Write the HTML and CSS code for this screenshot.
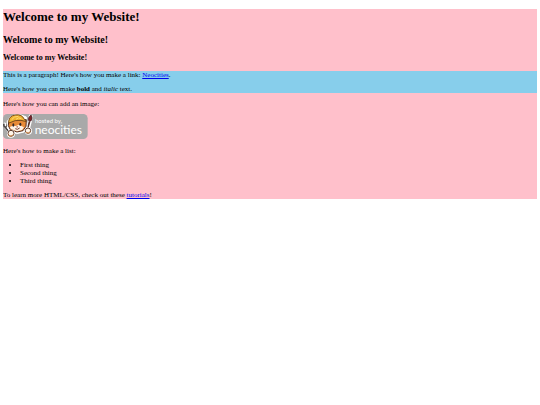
FILE: index.html
```html
<!DOCTYPE html>
<html lang="en">
<head>
<meta charset="UTF-8">
<meta name="viewport" content="width=device-width, initial-scale=1">
<title>Welcome to my Website!</title>
<link rel="stylesheet" href="styles.css">
</head>
<body>
<main class="page">
  <h1 class="title">Welcome to my Website!</h1>
  <h2 class="subtitle">Welcome to my Website!</h2>
  <h3 class="heading">Welcome to my Website!</h3>
  <div class="intro">
    <p>This is a paragraph! Here's how you make a link: <a href="#neocities">Neocities</a>.</p>
    <p>Here's how you can make <strong>bold</strong> and <em>italic</em> text.</p>
  </div>
  <p>Here's how you can add an image:</p>
  <svg class="badge" viewBox="0 0 255 75" role="img" aria-label="Hosted by Neocities">
    <rect width="254" height="75" rx="13" fill="#a9a9a9"/>
    <!-- wrench -->
    <path d="M5 31 L9 39 L18 51" stroke="#fff" stroke-width="10" fill="none" stroke-linecap="round"/>
    <path d="M3 29 Q1 38 7 40 L18 54 M12 29 Q14 36 8 40" stroke="#4b4545" stroke-width="5" fill="none"/>
    <!-- brush -->
    <path d="M83 7 L80 24 L74 47" stroke="#fff" stroke-width="12" fill="none" stroke-linecap="round"/>
    <path d="M80 22 L73 46" stroke="#563126" stroke-width="5"/>
    <path d="M84 2 Q73 12 77 20 L84 21 Q90 12 84 2Z" fill="#7e2528" stroke="#3f1820" stroke-width="2"/>
    <!-- head -->
    <path d="M13 22 L22 9 L35 3 L54 3 L70 9 L72 39 L63 54 L41 59 L20 51 L13 41Z" fill="#fff" stroke="#fff" stroke-width="3"/>
    <path d="M17 23 L25 19 L61 17 L70 17 L69 37 L60 50 L42 54 L22 47 L16 35Z" fill="#e88b38" stroke="#543027" stroke-width="3"/>
    <path d="M20 39 L30 35 L39 36 L47 32 L63 40 L57 48 L42 52 L24 45Z" fill="#fff3e7"/>
    <path d="M17 22 Q19 5 37 3 Q57 0 64 16 L70 23 L54 19 Q37 17 18 27Z" fill="#efb232" stroke="#7b4d1d" stroke-width="3"/>
    <path d="M26 17 Q33 6 46 7 M39 16 Q46 8 55 14" fill="none" stroke="#ffdc70" stroke-width="3"/>
    <ellipse cx="31" cy="33" rx="3" ry="5" fill="#30262a"/>
    <ellipse cx="52" cy="31" rx="3" ry="5" fill="#30262a"/>
    <path d="M39 38 L46 37 L43 41Z" fill="#923c32"/>
    <path d="M37 44 Q43 49 50 42" fill="none" stroke="#71372c" stroke-width="3"/>
    <!-- paws -->
    <circle cx="24" cy="59" r="12" fill="#fff"/>
    <circle cx="24" cy="58" r="9" fill="#fff5e9" stroke="#5d3b2c" stroke-width="3"/>
    <path d="M16 63 Q24 71 31 61" fill="none" stroke="#d48a46" stroke-width="3"/>
    <circle cx="76" cy="51" r="11" fill="#fff"/>
    <circle cx="75" cy="50" r="8" fill="#fff5e9" stroke="#5d3b2c" stroke-width="3"/>
    <path d="M69 55 Q76 61 82 53" fill="none" stroke="#d48a46" stroke-width="3"/>
    <text class="badge-small" x="96" y="28">hosted by,</text>
    <text class="badge-name" x="95" y="59">neocities</text>
  </svg>
  <p>Here's how to make a list:</p>
  <ul class="list">
    <li>First thing</li>
    <li>Second thing</li>
    <li>Third thing</li>
  </ul>
  <p>To learn more HTML/CSS, check out these <a href="#tutorials">tutorials</a>!</p>
</main>
</body>
</html>
```
FILE: styles.css
```css
body {
  margin: 9px 3px;
  background: #fff;
  color: #000;
  font: 7px/8px "Liberation Serif", "Times New Roman", serif;
}

.page {
  display: flow-root;
  background: pink;
}

.title,
.subtitle,
.heading {
  margin: 0 0 9px;
}

.title {
  font-size: 13px;
  line-height: 16px;
}

.subtitle {
  font-size: 10px;
  line-height: 11px;
}

.heading {
  font-size: 8px;
  line-height: 8px;
}

p {
  margin: 6px 0;
}

.intro {
  display: flow-root;
  margin-bottom: 7px;
  background: skyblue;
}

.intro p:first-child {
  margin-top: 0;
}

.intro p:last-child,
.page > p:last-child {
  margin-bottom: 0;
}

.badge {
  display: block;
  width: 85px;
  height: 25px;
  margin-bottom: 8px;
}

.badge-small,
.badge-name {
  fill: #fff;
  font-family: Lato, "Open Sans", sans-serif;
}

.badge-small {
  font-size: 18px;
}

.badge-name {
  font-size: 36px;
}

.list {
  margin: 6px 0;
  padding-left: 17px;
}

a {
  color: #00e;
}
```
